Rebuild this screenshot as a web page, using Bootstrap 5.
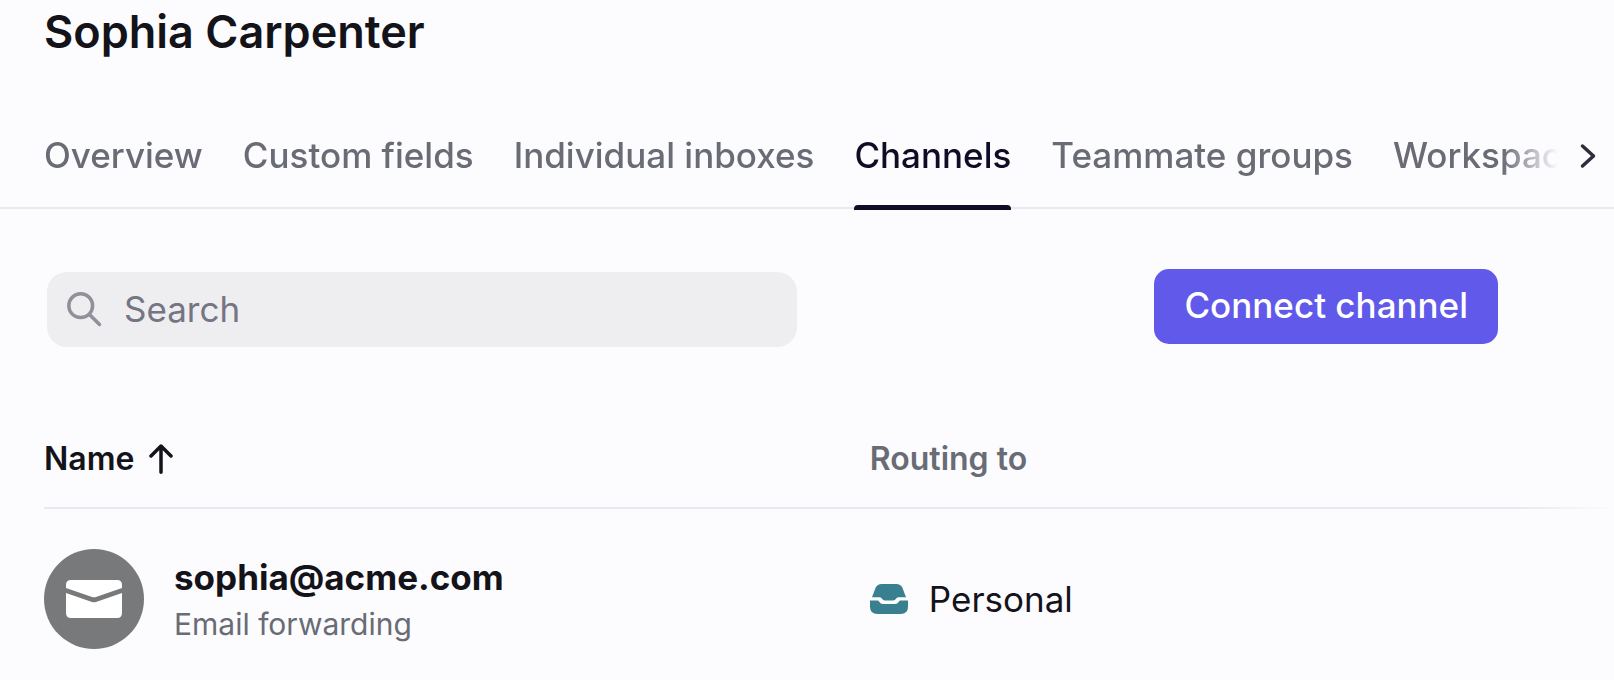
<!DOCTYPE html>
<html lang="en">
<head>
<meta charset="utf-8">
<meta name="viewport" content="width=device-width, initial-scale=1">
<title>Sophia Carpenter – Channels</title>
<link href="https://cdn.jsdelivr.net/npm/bootstrap@5.3.0/dist/css/bootstrap.min.css" rel="stylesheet">
<style>
  body { background: #fcfcfe; color: #14131a; font-family: Inter, "Liberation Sans", sans-serif; font-size: 35px; line-height: 44px; overflow-x: hidden; }
  .page-title { font-size: 45px; line-height: 56px; font-weight: 600; padding: 4px 44px 0; }
  .tab-bar { border-bottom: 2px solid #e9e8f0; margin-top: 64px; }
  .tab-list { gap: 40px; padding-left: 44px; white-space: nowrap; overflow: hidden; margin-bottom: -3px;
    -webkit-mask-image: linear-gradient(to left, transparent 0, #000 56px); mask-image: linear-gradient(to left, transparent 0, #000 56px); }
  .tab-list .nav-link { color: #696b75; font-weight: 500; padding: 9px 0 28px; border-bottom: 5px solid transparent; }
  .tab-list .nav-link.active { color: #0f0d26; position: relative; }
  .tab-list .nav-link.active::after { content: ""; position: absolute; left: 0; right: 0; bottom: -5px; height: 5px; border-radius: 4px 4px 0 0; background: #0f0d26; }
  .tab-next { width: 56px; border: 0; background: none; padding: 0 0 26px; }
  .toolbar { padding: 60px 116px 0 44px; }
  .search-wrap { width: 52%; padding: 3px; }
  .search-box { background: #eeeef0; border-radius: 20px; height: 75px; padding: 0 20px; gap: 22px; }
  .search-box input, .search-box input:focus { background: none; border: 0; box-shadow: none; padding: 0 0 2px; font-size: 35px; line-height: 44px; color: #14131a; }
  .search-box input::placeholder { color: #757584; opacity: 1; }
  .btn-connect { --bs-btn-bg: #6059ea; --bs-btn-color: #fff; --bs-btn-hover-bg: #514adb; --bs-btn-hover-color: #fff;
    font-size: 35px; line-height: 44px; font-weight: 500; height: 75px; padding: 0 30px 4px; border: 0; border-radius: 15px; }
  .channel-wrap { padding: 62px 0 0 44px; }
  .channels { width: 100%; table-layout: fixed; }
  .channels thead tr { background: linear-gradient(to right, #e9e8f0 calc(100% - 94px), #fcfcfe) bottom / 100% 2px no-repeat; }
  .channels th { font-size: 32px; font-weight: 600; padding: 25px 0 28px; color: #696b75; }
  .channels th.sorted { color: #14131a; width: 52.6%; }
  .sort-label { gap: 15px; }
  .channels td { padding: 40px 0 24px; vertical-align: middle; }
  .avatar { width: 100px; height: 100px; border-radius: 50%; background: #78797b; }
  .channel-text { padding: 3px 0 0 30px; }
  .channel-name { font-weight: 700; }
  .channel-kind { font-size: 30px; color: #696b75; margin-top: 3px; }
  .routing { gap: 21px; }
</style>
</head>
<body>
<header>
  <h1 class="page-title m-0">Sophia Carpenter</h1>
  <nav class="tab-bar d-flex" aria-label="Teammate sections">
    <div class="tab-list nav flex-nowrap flex-grow-1">
      <a class="nav-link" href="#overview">Overview</a>
      <a class="nav-link" href="#fields">Custom fields</a>
      <a class="nav-link" href="#inboxes">Individual inboxes</a>
      <a class="nav-link active" aria-current="page" href="#channels">Channels</a>
      <a class="nav-link" href="#groups">Teammate groups</a>
      <a class="nav-link" href="#workspaces">Workspaces</a>
    </div>
    <button class="tab-next flex-shrink-0" type="button" aria-label="Next tabs">
      <svg width="56" height="30" viewBox="0 0 56 30" fill="none" stroke="#2f2c3c" stroke-width="3.500" stroke-linecap="round" stroke-linejoin="round"><path d="M24.500 5l11 10-11 10"/></svg>
    </button>
  </nav>
</header>
<main>
  <div class="toolbar d-flex justify-content-between align-items-start">
    <div class="search-wrap">
      <label class="search-box d-flex align-items-center">
        <svg class="flex-shrink-0" width="35" height="35" viewBox="0 0 35 35" fill="none" stroke="#8f909a" stroke-width="3.500" stroke-linecap="round"><circle cx="13.700" cy="13.700" r="11.900"/><path d="M22.500 22.500l10 10"/></svg>
        <input class="form-control" type="search" placeholder="Search" aria-label="Search channels">
      </label>
    </div>
    <button class="btn btn-connect" type="button">Connect channel</button>
  </div>
  <div class="channel-wrap">
    <table class="channels">
      <thead>
        <tr>
          <th class="sorted" scope="col" aria-sort="ascending">
            <div class="sort-label d-flex align-items-center">Name
              <svg width="24" height="30" viewBox="0 0 24 30" fill="none" stroke="#14131a" stroke-width="3.500" stroke-linecap="round" stroke-linejoin="round"><path d="M12 28.200V2.200M2 12L12 2L22 12"/></svg>
            </div>
          </th>
          <th scope="col">Routing to</th>
        </tr>
      </thead>
      <tbody>
        <tr>
          <td>
            <div class="d-flex align-items-center">
              <span class="avatar d-flex align-items-center justify-content-center flex-shrink-0">
                <svg width="56" height="38" viewBox="0 0 56 38" fill="#fff"><path d="M5 0H51Q56 0 56 5V8L30 17Q28 17.700 26 17L0 8V5Q0 0 5 0Z"/><path d="M0 13L26 22Q28 22.700 30 22L56 13V33Q56 38 51 38H5Q0 38 0 33Z"/></svg>
              </span>
              <div class="channel-text">
                <div class="channel-name">sophia@acme.com</div>
                <div class="channel-kind">Email forwarding</div>
              </div>
            </div>
          </td>
          <td>
            <div class="routing d-flex align-items-center">
              <svg width="38" height="30" viewBox="0 0 38 30" fill="#387f8f"><path d="M11.500 0H26.500Q30.500 0 32.300 3.600L36 13.200H28.500Q27 13.200 26.200 14.400Q25 16.500 23 16.500H15Q13 16.500 11.800 14.400Q11 13.200 9.500 13.200H2L5.700 3.600Q7.500 0 11.500 0Z"/><path d="M0 16.500H7.500Q8.500 16.500 9.200 17.700Q10.500 20 13 20H25Q27.500 20 28.800 17.700Q29.500 16.500 30.500 16.500H38V22.500Q38 30 30.500 30H7.500Q0 30 0 22.500Z"/></svg>
              <span>Personal</span>
            </div>
          </td>
        </tr>
      </tbody>
    </table>
  </div>
</main>
<script src="https://cdn.jsdelivr.net/npm/bootstrap@5.3.0/dist/js/bootstrap.bundle.min.js"></script>
</body>
</html>
